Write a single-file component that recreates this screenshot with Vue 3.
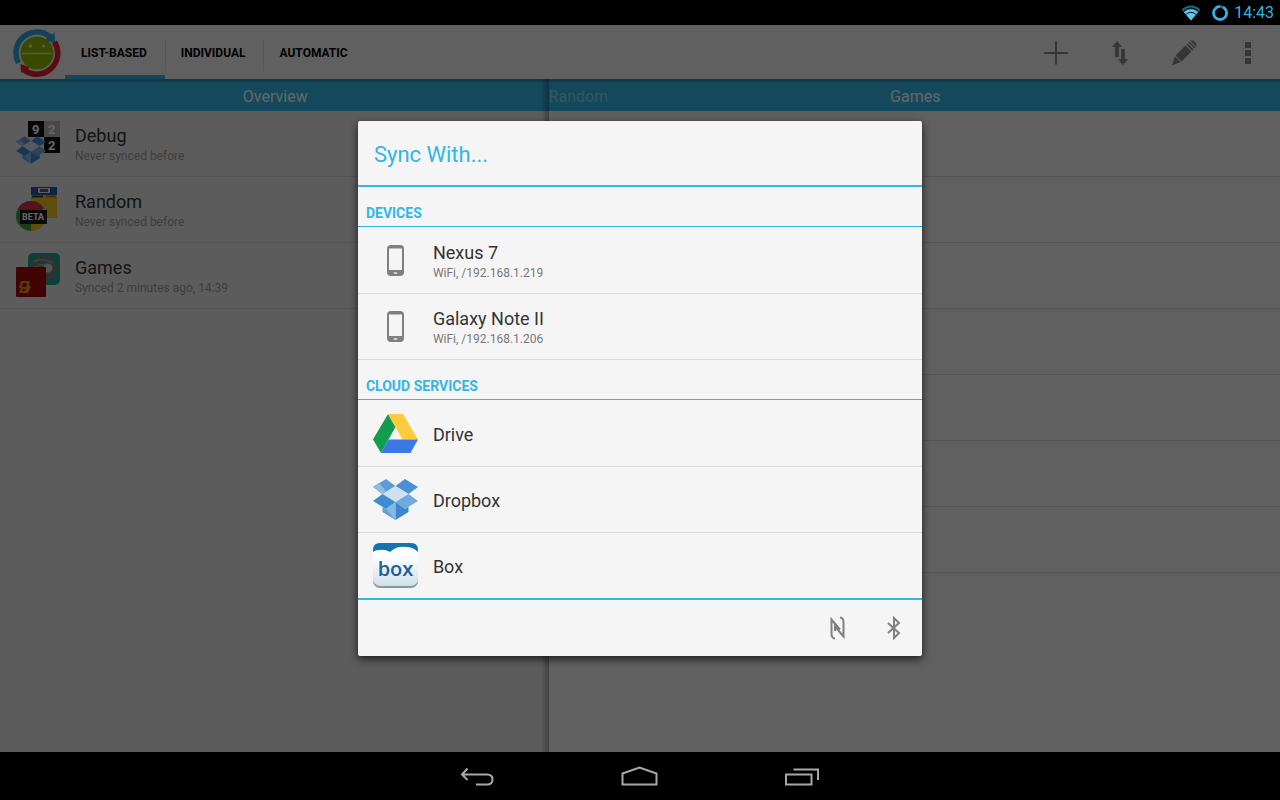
<template>
  <div class="screen">
    <svg class="sprite" aria-hidden="true">
      <symbol id="dropbox" viewBox="0 0 45 45">
        <polygon points="13,2 22.5,9 9.5,17 0,10" fill="#5b9bd8" />
        <polygon points="32,2 45,10 35.5,17 22.5,9" fill="#4a90d4" />
        <polygon points="22.5,9 35.5,17 22.5,25 9.5,17" fill="#cfe0f0" />
        <polygon points="9.5,17 22.5,25 13,32 0,24" fill="#3f8bd3" />
        <polygon points="35.5,17 45,24 32,32 22.5,25" fill="#6fa9dd" />
        <polygon points="9.5,30 13,32 22.5,25 22.5,43 9.5,35" fill="#5fa0db" />
        <polygon points="35.5,30 32,32 22.5,25 22.5,43 35.5,35" fill="#3d85cc" />
        <polygon points="13,32 22.5,25 22.5,43" fill="#86b8e4" />
        <polygon points="0,10 9.5,17 13,14 6,6" fill="#8fbbe4" />
      </symbol>
    </svg>

    <header class="status-bar">
      <svg width="20" height="16" viewBox="0 0 20 16" aria-label="WiFi">
        <path d="M0.5 4.5Q10 -3.5 19.5 4.5L10 15.5z" fill="#1d6884" />
        <path d="M3 7.2Q10 1.5 17 7.2L10 15.5z" fill="#5fc6ee" />
        <path d="M2.5 6Q10 0 17.5 6M5.2 9.2Q10 5.4 14.8 9.2" fill="none" stroke="#000" stroke-width="1" />
      </svg>
      <svg width="18" height="18" viewBox="0 0 18 18" aria-label="Battery">
        <circle cx="9" cy="9" r="6.5" fill="none" stroke="#1d6884" stroke-width="2.5" />
        <path d="M6 3.2A6.5 6.5 0 1 0 9 2.5" transform="matrix(-1 0 0 1 18 0)" fill="none" stroke="#33b5e5" stroke-width="2.5" />
      </svg>
      <time>14:43</time>
    </header>

    <div class="stage">
      <div class="app">
        <nav class="action-bar">
          <svg class="logo" width="48" height="48" viewBox="0 0 48 48" aria-label="App logo">
            <path d="M5.5 34A21 21 0 0 1 37 7.5" fill="none" stroke="#2fa4dc" stroke-width="5.5" />
            <path d="M41.5 3.5L42 14.5L31.5 11z" fill="#2fa4dc" />
            <path d="M41.5 13A21 21 0 0 1 10.5 40.5" fill="none" stroke="#e0202c" stroke-width="5.5" />
            <path d="M7.5 35L17.5 38.5L8 44z" fill="#e0202c" />
            <circle cx="24" cy="24" r="16.5" fill="#8fb800" />
            <path d="M9 24.5H39" stroke="#d5e39a" stroke-width="1.5" />
            <circle cx="17.5" cy="17" r="1.5" fill="#eef5c8" />
            <circle cx="30.5" cy="17" r="1.5" fill="#eef5c8" />
          </svg>
          <button
            v-for="tab in tabs"
            :key="tab"
            type="button"
            class="tab"
            :class="{ 'tab--active': tab === activeTab }"
            @click="activeTab = tab"
          >
            {{ tab }}
          </button>
          <div class="actions">
            <button type="button" class="action" aria-label="Add">
              <svg width="32" height="32" viewBox="0 0 32 32">
                <path d="M16 4.500V27.500M4 16H28" stroke="currentColor" stroke-width="2" />
              </svg>
            </button>
            <button type="button" class="action" aria-label="Sort">
              <svg width="32" height="32" viewBox="0 0 32 32" fill="currentColor">
                <path d="M13 4L18 10H14.800V20H11.200V10H8z" />
                <path d="M19 28L24 22H20.800V12H17.200V22H14z" />
              </svg>
            </button>
            <button type="button" class="action" aria-label="Edit">
              <svg width="32" height="32" viewBox="0 0 32 32" fill="currentColor">
                <path d="M4 28.500L7 19.500L12.500 25z" />
                <path d="M7.500 18.500L17.500 8.500L23.500 14.500L13.500 24.500z" />
                <path d="M18.300 7.700L19.600 6.400L25.600 12.400L24.300 13.700z" />
                <path d="M20.400 5.600L21.600 4.400L27.600 10.400L26.400 11.600z" />
                <path d="M22.500 3.800Q24.500 2.500 27 5Q29.500 7.500 28.200 9.500z" />
              </svg>
            </button>
            <button type="button" class="action" aria-label="More options">
              <svg width="32" height="32" viewBox="0 0 32 32" fill="currentColor">
                <path d="M13 5h6v6h-6zM13 13h6v6h-6zM13 21h6v6h-6z" />
              </svg>
            </button>
          </div>
        </nav>

        <main class="panes">
          <section class="pane pane--lists">
            <h2 class="pane__title">Overview</h2>
            <ul class="list">
              <li v-for="item in lists" :key="item.name">
                <button type="button" class="row row--list">
                  <svg v-if="item.name === 'Debug'" class="row__icon" viewBox="0 0 45 45">
                    <rect x="29" width="16" height="16" fill="#b4b4b4" />
                    <path d="M13 0h16v16h-16zM29 16h16v16h-16z" fill="#111" />
                    <g class="digits" fill="#fff">
                      <text x="17" y="13">9</text>
                      <text x="33" y="13">2</text>
                      <text x="33" y="29">2</text>
                    </g>
                    <use href="#dropbox" x="1" y="14" width="30" height="30" />
                  </svg>
                  <svg v-else-if="item.name === 'Random'" class="row__icon" viewBox="0 0 45 45">
                    <rect x="16" width="26" height="31" rx="1" fill="#e8c51c" />
                    <rect x="16" width="26" height="8" fill="#2458a8" />
                    <path d="M23 1h12v5h-12z" fill="#e5e5e5" />
                    <path d="M25 2h8v3h-8z" fill="#557" />
                    <path d="M17 9.500h11" stroke="#333" stroke-width="2" />
                    <path d="M31 9.500h10" stroke="#e05a2a" stroke-width="2" />
                    <circle cx="16" cy="29" r="15" fill="#3f9e3c" />
                    <path d="M16 29L3 21.500A15 15 0 0 1 29 21.500z" fill="#d8304a" />
                    <path d="M16 29L29 21.500A15 15 0 0 1 16 44z" fill="#e9c51c" />
                    <rect x="5" y="23" width="27" height="14" fill="#1b1b1b" />
                    <text class="beta" x="7" y="33" fill="#fff">BETA</text>
                  </svg>
                  <svg v-else class="row__icon" viewBox="0 0 45 45">
                    <rect x="13" width="32" height="32" rx="5" fill="#22a08e" />
                    <circle cx="29" cy="15" r="13" fill="#6f7f78" />
                    <path d="M18 9Q28 4 38 10M17 18Q22 10 32 12" fill="none" stroke="#98a39c" stroke-width="1.500" />
                    <circle cx="33" cy="15" r="4.500" fill="#c9cfcb" />
                    <rect x="1" y="14" width="30" height="30" rx="1" fill="#a30a0a" />
                    <path d="M6 28h9l-1 5h2l-3 7h-9l2-5h-2z" fill="#e08a1e" />
                    <path d="M8 30h4l-1 4h-4zM8 36h3l-1 2h-3z" fill="#a30a0a" />
                  </svg>
                  <span class="row__text">
                    <span class="row__name">{{ item.name }}</span>
                    <span class="row__detail">{{ item.detail }}</span>
                  </span>
                </button>
              </li>
            </ul>
          </section>

          <section class="pane pane--apps">
            <h2 class="pane__title"><span class="pane__previous">Random</span>Games</h2>
            <ul class="list">
              <li v-for="n in 7" :key="n" class="slot"></li>
            </ul>
          </section>
        </main>
      </div>

      <div class="scrim">
        <div class="dialog" role="dialog" aria-labelledby="dialog-title">
          <h1 id="dialog-title" class="dialog__title">Sync With...</h1>

          <h3 class="dialog__section">DEVICES</h3>
          <ul class="list list--dialog">
            <li v-for="device in devices" :key="device.name">
              <button type="button" class="row">
                <svg class="row__icon" viewBox="0 0 45 45">
                  <rect x="14" y="7" width="17" height="31" rx="4" fill="#808080" />
                  <rect x="16" y="10.500" width="13" height="21.500" fill="#f5f5f5" />
                  <rect x="20.500" y="34" width="4" height="2" rx="1" fill="#ccc" />
                </svg>
                <span class="row__text">
                  <span class="row__name">{{ device.name }}</span>
                  <span class="row__detail">{{ device.detail }}</span>
                </span>
              </button>
            </li>
          </ul>

          <h3 class="dialog__section">CLOUD SERVICES</h3>
          <ul class="list list--dialog list--last">
            <li v-for="service in services" :key="service">
              <button type="button" class="row">
                <svg v-if="service === 'Drive'" class="row__icon" viewBox="0 0 45 45">
                  <polygon points="15,3 22.5,16 8,42 0,28.5" fill="#119d50" />
                  <polygon points="15,3 30,3 45,28.5 29.5,28.5" fill="#fccb3e" />
                  <polygon points="15.5,28.5 45,28.5 37.5,42 8,42" fill="#3a78e7" />
                </svg>
                <svg v-else-if="service === 'Dropbox'" class="row__icon" viewBox="0 0 45 45">
                  <use href="#dropbox" width="45" height="45" />
                </svg>
                <svg v-else class="row__icon" viewBox="0 0 45 45">
                  <defs>
                    <linearGradient id="box-face" x1="0" y1="0" x2="0" y2="1">
                      <stop offset="0.3" stop-color="#fff" />
                      <stop offset="1" stop-color="#cfdfe9" />
                    </linearGradient>
                  </defs>
                  <rect width="45" height="45" rx="7" fill="#8797a0" />
                  <rect width="45" height="43" rx="7" fill="url(#box-face)" />
                  <path d="M0 9V7Q0 0 7 0H38Q45 0 45 7V9Q40 4 33 4Q23 3 17 9Q12 6 6 7Q2 7 0 9z" fill="#1374b4" />
                  <text class="box-word" x="22.5" y="33" text-anchor="middle" fill="#1d5c9c">box</text>
                </svg>
                <span class="row__text">
                  <span class="row__name">{{ service }}</span>
                </span>
              </button>
            </li>
          </ul>

          <footer class="dialog__footer">
            <button type="button" class="link-button" aria-label="NFC">
              <svg width="32" height="32" viewBox="0 0 32 32" fill="none" stroke="currentColor" stroke-width="2">
                <path d="M13 26.5Q9.5 26 9.5 22V7.500L18 17.500" />
                <path d="M18 5.500Q21.500 6 21.500 10V24.500L13 14.500V19" />
              </svg>
            </button>
            <button type="button" class="link-button" aria-label="Bluetooth">
              <svg width="32" height="32" viewBox="0 0 32 32" fill="none" stroke="currentColor" stroke-width="2">
                <path d="M10 11L21 21L16 26V6L21 11L10 21" />
              </svg>
            </button>
          </footer>
        </div>
      </div>
    </div>

    <nav class="nav-bar">
      <button type="button" class="nav-button" aria-label="Back">
        <svg width="40" height="24" viewBox="0 0 40 24">
          <path d="M9.5 3.5L4 9.5L9.5 15M4 9.5H29Q34.5 9.5 34.5 14.5T29 19.5H18" />
        </svg>
      </button>
      <button type="button" class="nav-button" aria-label="Home">
        <svg width="40" height="24" viewBox="0 0 40 24">
          <path d="M2.5 8.500L19.500 2.500L36.500 8.500V19.500H2.500z" />
        </svg>
      </button>
      <button type="button" class="nav-button" aria-label="Recent apps">
        <svg width="40" height="24" viewBox="0 0 40 24">
          <path d="M4 9.500H29.500V19.500H4zM11.500 4.500H36V15" />
        </svg>
      </button>
    </nav>
  </div>
</template>

<script setup>
import { ref } from 'vue'

const tabs = ['LIST-BASED', 'INDIVIDUAL', 'AUTOMATIC']
const activeTab = ref('LIST-BASED')

const lists = [
  { name: 'Debug', detail: 'Never synced before' },
  { name: 'Random', detail: 'Never synced before' },
  { name: 'Games', detail: 'Synced 2 minutes ago, 14:39' },
]

const devices = [
  { name: 'Nexus 7', detail: 'WiFi, /192.168.1.219' },
  { name: 'Galaxy Note II', detail: 'WiFi, /192.168.1.206' },
]

const services = ['Drive', 'Dropbox', 'Box']
</script>

<style>
body {
  background: #000;
}
</style>

<style scoped>
.screen {
  min-height: 100vh;
  display: flex;
  flex-direction: column;
  background: #000;
  color: #333;
  font-family: Roboto, sans-serif;
}

.sprite {
  position: absolute;
  width: 0;
  height: 0;
}

h1,
h2,
h3,
ul {
  margin: 0;
  padding: 0;
  font-weight: 400;
  list-style: none;
}

button {
  margin: 0;
  padding: 0;
  border: 0;
  background: none;
  color: inherit;
  font: inherit;
  text-align: left;
  cursor: pointer;
}

svg {
  display: block;
  flex: none;
}

.status-bar {
  height: 25px;
  padding-right: 6px;
  display: flex;
  align-items: center;
  justify-content: flex-end;
  gap: 10px;
  color: #33b5e5;
  font-size: 16px;
}

.status-bar time {
  margin-left: -5px;
}

.stage {
  position: relative;
  flex: 1;
  display: flex;
}

.app {
  flex: 1;
  display: flex;
  flex-direction: column;
  background: #f0f0f0;
}

.action-bar {
  height: 54px;
  display: flex;
  align-items: stretch;
}

.logo {
  margin: 4px 4px 2px 13px;
}

.tab {
  position: relative;
  padding: 2px 18px 0 16px;
  color: #000;
  font-size: 12px;
  font-weight: 700;
}

.tab + .tab::before {
  content: '';
  position: absolute;
  left: 0;
  top: 15px;
  bottom: 8px;
  width: 1px;
  background: #d8d8d8;
}

.tab--active {
  box-shadow: inset 0 -4px #33b5e5;
}

.actions {
  margin-left: auto;
  display: flex;
}

.action {
  width: 64px;
  padding-top: 2px;
  display: flex;
  align-items: center;
  justify-content: center;
  color: #858585;
}

.panes {
  flex: 1;
  display: grid;
  grid-template-columns: 3fr 4fr;
}

.pane {
  position: relative;
}

.pane--lists {
  background: #e6e6e6;
}

.pane--lists::after {
  content: '';
  position: absolute;
  top: 0;
  right: 0;
  bottom: 0;
  width: 8px;
  background: linear-gradient(to right, transparent, rgba(0, 0, 0, 0.3));
}

.pane__title {
  box-sizing: border-box;
  height: 32px;
  padding: 2px 0 0 2px;
  display: flex;
  align-items: center;
  justify-content: center;
  box-shadow: inset 0 3px 1px rgba(0, 0, 0, 0.2);
  background: #33b5e5;
  color: #fff;
  font-size: 16px;
}

.pane__previous {
  position: absolute;
  left: 0;
  opacity: 0.4;
}

.row {
  box-sizing: border-box;
  width: 100%;
  height: 66px;
  padding: 0 15px;
  display: flex;
  align-items: center;
  gap: 15px;
  border-bottom: 1px solid #dcdcdc;
}

.row--list {
  border-color: #d2d2d2;
}

.slot {
  box-sizing: border-box;
  height: 66px;
  border-bottom: 1px solid #d2d2d2;
}

.row__icon {
  width: 45px;
  height: 45px;
  overflow: visible;
}

.row__text {
  padding-top: 2px;
  display: flex;
  flex-direction: column;
}

.row__name {
  font-size: 18px;
  line-height: 22px;
}

.row__detail {
  color: #777;
  font-size: 12px;
  line-height: 18px;
}

.row--list .row__detail {
  color: #999;
}

.digits {
  font: 700 13px Roboto, sans-serif;
}

.beta {
  font: 700 9px Roboto, sans-serif;
}

.box-word {
  font: 600 20px 'Open Sans', sans-serif;
}

.scrim {
  position: absolute;
  inset: 0;
  display: flex;
  align-items: center;
  justify-content: center;
  background: rgba(0, 0, 0, 0.6);
}

.dialog {
  width: calc(44% + 1px);
  border-radius: 2px;
  background: #f5f5f5;
  box-shadow: 0 3px 8px rgba(0, 0, 0, 0.7);
}

.dialog__title {
  padding: 4px 16px 0;
  border-bottom: 2px solid #33b5e5;
  color: #33b5e5;
  font-size: 22px;
  line-height: 60px;
}

.dialog__section {
  padding: 13px 8px 0;
  border-bottom: 1px solid #33b5e5;
  color: #33b5e5;
  font-size: 14px;
  font-weight: 700;
  line-height: 26px;
}

.list--dialog {
  padding-top: 1px;
}

.list--last li:last-child .row {
  height: 65px;
  border-bottom: 0;
}

.dialog__footer {
  height: 56px;
  display: flex;
  justify-content: flex-end;
  border-top: 2px solid #33b5e5;
}

.link-button {
  width: 56px;
  display: flex;
  align-items: center;
  justify-content: center;
  color: #808080;
}

.nav-bar {
  height: 48px;
  display: flex;
  justify-content: center;
}

.nav-button {
  width: 162px;
  padding-top: 2px;
  display: flex;
  align-items: center;
  justify-content: center;
}

.nav-button path {
  fill: none;
  stroke: #a8a8a8;
  stroke-width: 2;
}
</style>
